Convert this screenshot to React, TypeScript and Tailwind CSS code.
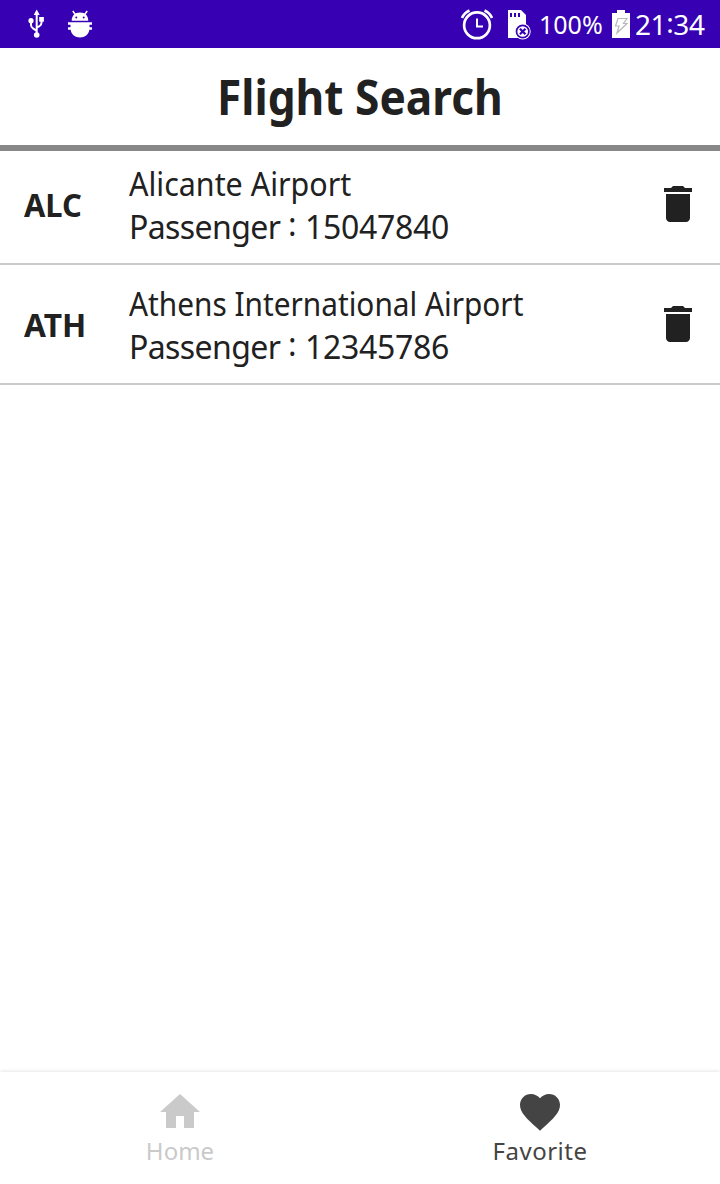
type Airport = { code: string; name: string; passengers: string; codeClass: string; nameClass: string };

const airports: Airport[] = [
  { code: "ALC", name: "Alicante Airport", passengers: "15047840", codeClass: "scale-x-[0.965]", nameClass: "scale-x-[0.951]" },
  { code: "ATH", name: "Athens International Airport", passengers: "12345786", codeClass: "scale-x-[0.99]", nameClass: "scale-x-[0.931]" },
];

function UsbIcon() {
  return (
    <svg width="24" height="40" viewBox="24 4 24 40" fill="none" stroke="#fff" strokeWidth="2">
      <path d="M36.700 14v20M31 21v4q0 2.200 2 3.300l3.700 2.500M41.500 20v2.500q0 2.700-2 3.600l-2.800 1.500" />
      <path d="M36.700 9.500l3 5.500h-6z" fill="#fff" stroke="none" />
      <circle cx="31" cy="20.700" r="2.600" fill="#fff" stroke="none" />
      <circle cx="36.700" cy="35" r="2.800" fill="#fff" stroke="none" />
      <path d="M39.200 17h4.700v4.700h-4.700z" fill="#fff" stroke="none" />
    </svg>
  );
}

function DebugIcon() {
  return (
    <svg width="28" height="40" viewBox="66 4 28 40" fill="#fff">
      <path fillRule="evenodd" d="M71.700 20.800c0-5 3-8.300 8.300-8.300s8.300 3.300 8.300 8.300zM75.300 17.500a1 1 0 1 0 2 0a1 1 0 1 0-2 0zM82.700 17.500a1 1 0 1 0 2 0a1 1 0 1 0-2 0z" />
      <path d="M72.800 11l2.500 3.500M87.200 11l-2.500 3.500" stroke="#fff" strokeWidth="1.500" />
      <path d="M68 22.200h24v2.600h-2.500v2.500H92v2.500h-2.600c-.8 4.800-4.500 7.700-9.400 7.700s-8.600-2.900-9.400-7.700H68v-2.500h2.500v-2.500H68z" />
    </svg>
  );
}

function AlarmIcon() {
  return (
    <svg width="36" height="40" viewBox="459 4 36 40" fill="none" stroke="#fff">
      <circle cx="477" cy="25.300" r="12.900" strokeWidth="2.700" />
      <path d="M477 18.500v8h6" strokeWidth="2" />
      <path d="M462 18q2-5 7.500-7.500M492 18q-2-5-7.500-7.500" strokeWidth="2.600" />
    </svg>
  );
}

function SdCardIcon() {
  return (
    <svg width="26" height="40" viewBox="506 4 26 40">
      <path d="M508 10h13l5 5v23h-18z" fill="#fff" />
      <path d="M510 13h2v4h-2zM514 13h2v4h-2zM518 13h2v4h-2z" fill="#3700b3" />
      <circle cx="522.700" cy="31.500" r="8" fill="#fff" />
      <circle cx="522.700" cy="31.500" r="6.200" fill="#fff" stroke="#3700b3" strokeWidth="1.700" />
      <path d="M519.900 28.700l5.600 5.600M525.500 28.700l-5.600 5.600" stroke="#3700b3" strokeWidth="2.200" />
    </svg>
  );
}

function BatteryIcon() {
  return (
    <svg width="18" height="40" viewBox="612 4 18 40">
      <path d="M617 10h8v3h5v25h-18V13h5z" fill="#fff" />
      <path d="M618 18.500h9l-3.500 5h3.500l-10 9.500 2-7h-3.500z" fill="none" stroke="#b8b8b8" strokeWidth="1.200" />
    </svg>
  );
}

function StatusBar() {
  return (
    <div className="flex h-12 items-center bg-[#3700b3] text-white">
      <div className="flex flex-1 items-center gap-[18px] pl-6">
        <UsbIcon />
        <DebugIcon />
      </div>
      <div className="flex w-[261px] items-center">
        <AlarmIcon />
        <div className="w-[11px]" />
        <SdCardIcon />
        <div className="w-[7px]" />
        <span className="w-[73px] text-[25px] leading-[48px]">100%</span>
        <BatteryIcon />
        <span className="ml-[5px] text-[28px] leading-[46px] tracking-[-0.4px] whitespace-nowrap">
          21<span className="inline-block -translate-y-[2px]">:</span>34
        </span>
      </div>
    </div>
  );
}

function AirportRow({ airport }: { airport: Airport }) {
  return (
    <li className="flex h-[120px] items-center border-b-2 border-[#cacaca] pr-[18px] pl-6">
      <div className="w-[105px] pt-[2px] text-[32px] leading-[44px] font-bold">
        <span className={`inline-block origin-left ${airport.codeClass}`}>{airport.code}</span>
      </div>
      <div className="flex-1 pt-[2px] text-[32px] leading-[43px] whitespace-nowrap">
        <p className={`origin-left ${airport.nameClass}`}>{airport.name}</p>
        <p className="flex">
          <span className="w-[159px] tracking-[-0.6px]">Passenger</span>
          <span className="w-[17px] -translate-y-[3px]">:</span>
          <span className="tracking-[-0.3px]">{airport.passengers}</span>
        </p>
      </div>
      <svg width="48" height="48" viewBox="0 0 24 24" fill="#212121">
        <path d="M6 19c0 1.100.9 2 2 2h8c1.100 0 2-.9 2-2V7H6v12zM19 4h-3.500l-1-1h-5l-1 1H5v2h14V4z" />
      </svg>
    </li>
  );
}

export default function App() {
  return (
    <div className="flex h-[1184px] w-[720px] flex-col overflow-hidden bg-white font-['Noto_Sans',sans-serif] text-[#212121]">
      <StatusBar />
      <header className="z-10 h-[103px] border-b-6 border-[#888888] pl-[217px]">
        <h1 className="origin-left scale-x-[0.921] text-[48px] leading-[97px] font-bold whitespace-nowrap">Flight Search</h1>
      </header>
      <ul className="-mt-[6px] flex-1">
        {airports.map((airport) => (
          <AirportRow key={airport.code} airport={airport} />
        ))}
      </ul>
      <nav className="grid h-28 grid-cols-2 bg-white shadow-[0_0_4px_rgba(0,0,0,0.15)]">
        <a className="flex flex-col items-center pt-4 text-[#cacaca]">
          <svg width="48" height="48" viewBox="0 0 24 24" fill="currentColor">
            <path d="M10 20v-6h4v6h5v-8h3L12 3 2 12h3v8z" />
          </svg>
          <span className="text-2xl leading-[30px]">Home</span>
        </a>
        <a className="flex flex-col items-center pt-4 text-[#444444]">
          <svg width="48" height="48" viewBox="0 0 24 24" fill="currentColor">
            <path d="M12 21.350l-1.450-1.320C5.400 15.360 2 12.280 2 8.500 2 5.420 4.420 3 7.500 3c1.740 0 3.410.81 4.500 2.090C13.090 3.810 14.760 3 16.500 3 19.580 3 22 5.420 22 8.500c0 3.780-3.400 6.860-8.550 11.540L12 21.350z" />
          </svg>
          <span className="text-2xl leading-[30px] tracking-[0.5px]">Favorite</span>
        </a>
      </nav>
    </div>
  );
}
